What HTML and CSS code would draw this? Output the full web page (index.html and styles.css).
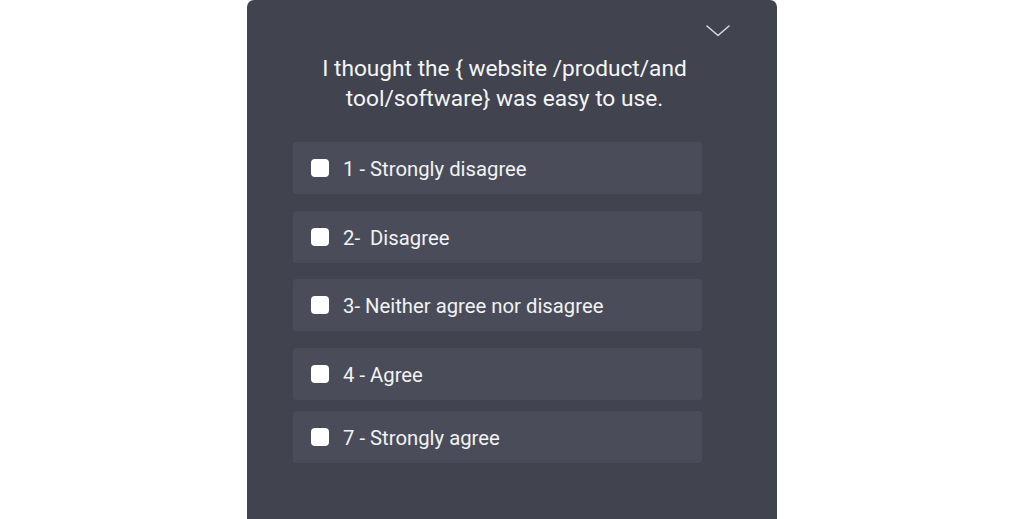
FILE: index.html
```html
<!DOCTYPE html>
<html lang="en">
<head>
<meta charset="utf-8">
<title>Survey</title>
<link rel="stylesheet" href="styles.css">
</head>
<body>
<div class="panel">
  <div class="panel-head">
    <button class="collapse" aria-label="Collapse">
      <svg width="24" height="12" viewBox="0 0 24 12"><polyline points="1,1 12,10.5 23,1" fill="none" stroke="#d6d8de" stroke-width="1.6" stroke-linecap="round" stroke-linejoin="round"/></svg>
    </button>
  </div>
  <h2 class="question">I thought the { website /product/and tool/software} was easy to use.</h2>
  <ul class="options">
    <li class="option"><span class="box"></span><span class="label">1 - Strongly disagree</span></li>
    <li class="option"><span class="box"></span><span class="label">2-&nbsp; Disagree</span></li>
    <li class="option"><span class="box"></span><span class="label">3- Neither agree nor disagree</span></li>
    <li class="option"><span class="box"></span><span class="label">4 - Agree</span></li>
    <li class="option option-tight"><span class="box"></span><span class="label">7 - Strongly agree</span></li>
  </ul>
</div>
</body>
</html>
```
FILE: styles.css
```css
html, body {
  margin: 0;
  padding: 0;
  background: #ffffff;
  height: 100%;
}
body {
  font-family: Roboto, "Liberation Sans", sans-serif;
  overflow: hidden;
}
.panel {
  width: 530px;
  height: 519px;
  margin: 0 auto;
  background: #41444f;
  border-radius: 7px 7px 0 0;
  padding-top: 25px;
  box-sizing: border-box;
}
.panel-head {
  display: flex;
  justify-content: flex-end;
  padding-right: 47px;
  height: 11px;
}
.collapse {
  background: none;
  border: 0;
  padding: 0;
  width: 24px;
  height: 12px;
  display: block;
}
.collapse svg { display: block; }
.question {
  margin: 18px 0 0;
  padding: 0 58px 0 43px;
  text-align: center;
  font-size: 22.7px;
  line-height: 30px;
  font-weight: 400;
  color: #f4f5f7;
}
.options {
  list-style: none;
  margin: 28px 0 0;
  padding: 0 75px 0 46px;
  display: flex;
  flex-direction: column;
  gap: 16.5px;
}
.option {
  height: 52px;
  background: #4a4d59;
  border-radius: 3px;
  display: flex;
  align-items: center;
  padding-left: 18px;
}
.option-tight {
  margin-top: -5.5px;
}
.box {
  width: 18px;
  height: 18px;
  background: #ffffff;
  border-radius: 4px;
  flex: none;
}
.label {
  margin-left: 14px;
  margin-top: 2px;
  font-size: 20.3px;
  color: #f1f2f4;
}
```
